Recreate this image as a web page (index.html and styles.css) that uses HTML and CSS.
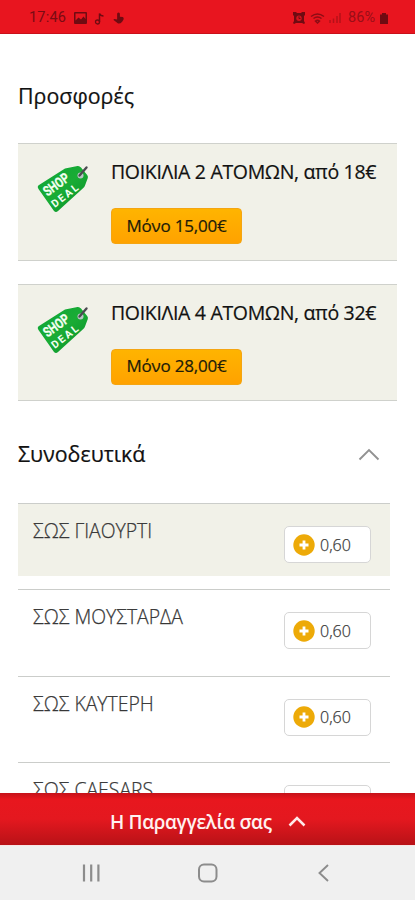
FILE: index.html
```html
<!DOCTYPE html>
<html lang="el">
<head>
<meta charset="utf-8">
<meta name="viewport" content="width=device-width, initial-scale=1">
<title>Προσφορές</title>
<link rel="stylesheet" href="styles.css">
</head>
<body>
<svg class="defs" aria-hidden="true">
  <defs>
    <linearGradient id="green" x1="0" y1="0" x2="1" y2="1"><stop offset="0" stop-color="#0da536"/><stop offset=".5" stop-color="#19ac35"/><stop offset="1" stop-color="#078d28"/></linearGradient>
    <symbol id="tag" viewBox="0 0 56 52">
      <path d="M3 22 29 5.500 41.500 3Q43.500 2.700 45 4.500L51.200 12Q52.300 13.500 51.800 15L49 22.500Q48.500 24 47 25.200L22 48Q20 50 18 48L2.500 26Q.8 23.500 3 22Z" fill="url(#green)"/>
      <circle cx="44.500" cy="12.500" r="3" fill="#b7c6c5"/>
      <path d="M43.500 12.500 50.500 4.500" stroke="#4b4a50" stroke-width="2.400" stroke-linecap="round"/>
      <g fill="#f2fff1" font-family="Roboto, sans-serif" font-weight="700">
        <text transform="translate(11.500 33.800) rotate(-36)" font-size="14" stroke="#f2fff1" stroke-width=".3" textLength="28.500" lengthAdjust="spacingAndGlyphs">SHOP</text>
        <text transform="translate(18.800 45) rotate(-38)" font-size="10.500" textLength="31" lengthAdjust="spacing">DEAL</text>
      </g>
    </symbol>
    <symbol id="plus" viewBox="0 0 22 22">
      <circle cx="11" cy="11" r="10.700" fill="#edaa08"/>
      <path d="M11 6.500v9M6.500 11h9" stroke="#fff" stroke-width="2.800"/>
    </symbol>
  </defs>
</svg>
<div class="screen">
  <header class="status">
    <div class="status-left">
      <span class="clock">17:46</span>
      <svg class="s-photo" viewBox="0 0 13 12"><path fill-rule="evenodd" d="M1 0h11q1 0 1 1v10q0 1-1 1H1q-1 0-1-1V1q0-1 1-1ZM1.500 1.500v7l3-3 2.500 2 2.500-3 2 2.500V1.500Z"/></svg>
      <svg class="s-note" viewBox="0 0 11 13"><path d="M5.500 10V1.500q1 2.500 4 2.500" fill="none" stroke="#6f0b12" stroke-width="1.500"/><circle cx="3.500" cy="10" r="2" fill="none" stroke="#6f0b12" stroke-width="1.300"/></svg>
      <svg class="s-hand" viewBox="0 0 12 13"><path d="M4.500 1.500q1.500-2 3 0V5l3 .5q1.500.5 1 2.500L10 10.500Q8 13 5.500 12.500L1 9q-1-1 .5-1.500l3 .5Z"/></svg>
    </div>
    <div class="status-right">
      <svg class="s-alarm" viewBox="0 0 12 12"><path d="M0 0h3l1 1h4l1-1h3v3l-1 1v5l1 2-1 1-2-1H3l-2 1-1-1 1-2V4L0 3Z"/><circle cx="6" cy="6.200" r="2.700" fill="#d5141d"/><path d="M6 4.300v2.200h1.500" stroke="#6f0b12" fill="none"/></svg>
      <svg class="s-wifi" viewBox="0 0 15 11"><path d="M1 3.500Q7.500-1.500 14 3.500M3.500 5.500q4-3 8 0M5.500 8q2-1.500 4 0L7.500 10Z" fill="none" stroke="#8d0d15" stroke-width="1.500"/></svg>
      <svg class="s-signal" viewBox="0 0 12 10"><path d="M1 10V7M4.500 10V5.500M8 10V3M11 10V0" stroke="#b51019" stroke-width="1.500"/></svg>
      <span class="battery">86%</span>
      <svg class="s-battery" viewBox="0 0 8 11"><path d="M0 1.500h2V0h4v1.500h2V11H0Z"/></svg>
    </div>
  </header>
  <main class="content">
    <h2 class="heading"><span>Προσφορές</span></h2>
    <section class="offers">
      <article class="offer">
        <svg class="tag"><use href="#tag"/></svg>
        <div class="offer-body">
          <h3 class="offer-title">ΠΟΙΚΙΛΙΑ 2 ΑΤΟΜΩΝ, από 18€</h3>
          <button class="deal">Μόνο 15,00€</button>
        </div>
      </article>
      <article class="offer">
        <svg class="tag"><use href="#tag"/></svg>
        <div class="offer-body">
          <h3 class="offer-title">ΠΟΙΚΙΛΙΑ 4 ΑΤΟΜΩΝ, από 32€</h3>
          <button class="deal">Μόνο 28,00€</button>
        </div>
      </article>
    </section>
    <h2 class="heading heading-sides"><span>Συνοδευτικά</span>
      <svg class="chevron" viewBox="0 0 22 13"><path d="M1.500 11.500 11 2l9.500 9.500" fill="none" stroke="#929292" stroke-width="1.900"/></svg>
    </h2>
    <ul class="items">
      <li class="item"><div class="item-inner active"><span class="item-name">ΣΩΣ ΓΙΑΟΥΡΤΙ</span><button class="price"><svg class="plus"><use href="#plus"/></svg><span>0,60</span></button></div></li>
      <li class="item"><div class="item-inner"><span class="item-name">ΣΩΣ ΜΟΥΣΤΑΡΔΑ</span><button class="price"><svg class="plus"><use href="#plus"/></svg><span>0,60</span></button></div></li>
      <li class="item"><div class="item-inner"><span class="item-name">ΣΩΣ ΚΑΥΤΕΡΗ</span><button class="price"><svg class="plus"><use href="#plus"/></svg><span>0,60</span></button></div></li>
      <li class="item"><div class="item-inner"><span class="item-name">ΣΩΣ CAESARS</span><div class="price"></div></div></li>
    </ul>
  </main>
  <div class="order"><span>Η Παραγγελία σας</span>
    <svg class="order-chevron" viewBox="0 0 18 11"><path d="M1.500 9.500 9 2l7.500 7.500" fill="none" stroke="#ffe9e9" stroke-width="2.500"/></svg>
  </div>
  <nav class="nav">
    <svg viewBox="0 0 20 20"><path d="M3 1.500v17M10.200 1.500v17M17.400 1.500v17" stroke="#8c8c8c" stroke-width="2.200"/></svg>
    <svg viewBox="0 0 20 20"><rect x="1" y="1.500" width="17.500" height="17" rx="5" fill="none" stroke="#8c8c8c" stroke-width="2"/></svg>
    <svg viewBox="0 0 20 20"><path d="M14 2 5.500 10l8.500 8" fill="none" stroke="#8c8c8c" stroke-width="1.900"/></svg>
  </nav>
</div>
</body>
</html>
```
FILE: styles.css
```css
* { box-sizing: border-box; }
body { margin: 0; background: #fff; font-family: "Open Sans", "Noto Sans", sans-serif; }
h2, h3, ul { margin: 0; padding: 0; font-weight: 400; list-style: none; }
button { font-family: inherit; margin: 0; padding: 0; }
svg { display: block; flex: none; }
.defs { position: absolute; width: 0; height: 0; }
.screen { width: 415px; height: 900px; display: flex; flex-direction: column; overflow: hidden; }

.status { height: 34px; flex: none; background: #e8151f; border-bottom: 1px solid #c9101a; display: flex; justify-content: space-between; padding: 3px 27px 0 29px; font: 400 14.5px/32px Roboto, sans-serif; color: #790b13; fill: #6f0b12; }
.status-left, .status-right { display: flex; align-items: center; }
.clock { width: 45px; letter-spacing: .2px; }
.s-photo { width: 13px; height: 12px; margin-right: 7px; }
.s-note { width: 11px; height: 13px; margin-right: 8px; }
.s-hand { width: 11px; height: 12px; }
.s-alarm { width: 12px; height: 12px; margin-right: 5px; }
.s-wifi { width: 15px; height: 11px; margin-right: 4px; }
.s-signal { width: 12px; height: 10px; margin-right: 7px; }
.battery { color: #990e17; margin-right: 5px; }
.s-battery { width: 8px; height: 11px; }

.content { flex: 1; min-height: 0; overflow: hidden; padding: 0 18px; }
.heading { height: 109px; display: flex; align-items: center; justify-content: space-between; font-size: 21.4px; line-height: 30px; color: #111; padding-top: 15px; -webkit-text-stroke: .2px #111; }
.offers { display: flex; flex-direction: column; gap: 23px; }
.offer { height: 117.5px; background: #f1f1e8; border-top: 1px solid #cfd1cc; border-bottom: 1px solid #cfd1cc; display: flex; padding: 12px 0 0 18px; }
.tag { width: 56px; height: 52px; margin: 7px 19px 0 0; }
.offer-title { font-size: 19.5px; letter-spacing: -.33px; line-height: 32px; white-space: nowrap; color: #111; -webkit-text-stroke: .2px #111; }
.deal { display: block; width: 131px; height: 36px; margin-top: 20px; border: 1px solid #f4a512; border-radius: 4px; background: linear-gradient(#ffb400, #ffa200); font-size: 17px; letter-spacing: -.2px; padding-bottom: 2px; color: #211b08; -webkit-text-stroke: .2px #211b08; }
.heading-sides { height: 102px; padding: 4px 17px 0 0; }
.chevron { width: 22px; height: 13px; }
.items { width: 372px; }
.item { height: 86.4px; border-top: 1px solid #cbcdca; }
.item-inner { height: 72px; display: flex; justify-content: space-between; padding: 0 19px 0 15px; }
.active { background: #f1f1e8; }
.item-name { font-size: 19.4px; line-height: 26px; font-weight: 300; color: #333; margin-top: 14px; -webkit-text-stroke: .25px #444; }
.price { width: 87px; height: 37px; margin-top: 22px; border: 1.5px solid #d6d6d6; border-radius: 5px; background: #fff; display: flex; align-items: center; gap: 5px; padding-left: 8px; font-size: 16px; font-weight: 300; color: #333; -webkit-text-stroke: .25px #444; }
.plus { width: 22px; height: 22px; }

.order { height: 52px; flex: none; background: linear-gradient(#c51219, #e8171e 12%, #e4181f 50%, #b81217); display: flex; align-items: center; gap: 16px; padding: 5px 0 0 110px; color: #fff1f0; font-size: 19px; letter-spacing: -.35px; font-weight: 600; }
.order-chevron { width: 18px; height: 11px; }
.nav { height: 55px; flex: none; background: #f0f0f0; border-top: 1px solid #f7e5e5; display: flex; align-items: center; justify-content: space-between; padding: 0 81px; }
.nav svg { width: 20px; height: 20px; }
```
